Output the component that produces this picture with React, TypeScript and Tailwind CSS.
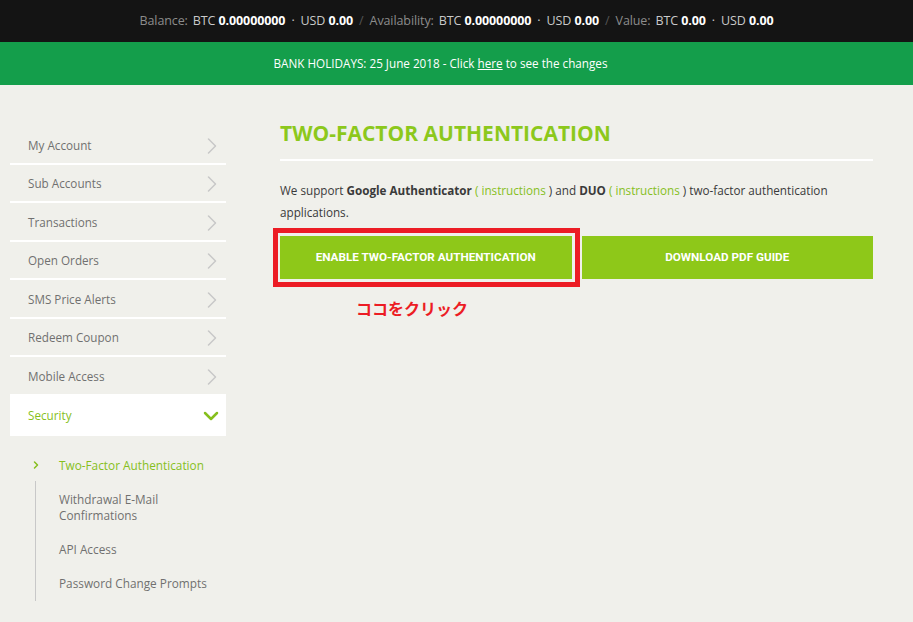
import { ChevronRight, ChevronDown } from "lucide-react";

const menu = [
  "My Account",
  "Sub Accounts",
  "Transactions",
  "Open Orders",
  "SMS Price Alerts",
  "Redeem Coupon",
  "Mobile Access",
];

const subItems = ["Withdrawal E-Mail Confirmations", "API Access", "Password Change Prompts"];

const Stat = ({ label, btc, usd }: { label: string; btc: string; usd: string }) => (
  <span>
    <span className="text-[#8c8c8c]">{label}:</span>
    <span className="ml-[5px] text-[#c9c9c9]">BTC</span>{" "}
    <span className="font-bold text-white">{btc}</span>
    <span className="mx-[6px] text-[#c9c9c9]">·</span>
    <span className="text-[#c9c9c9]">USD</span>{" "}
    <span className="font-bold text-white">{usd}</span>
  </span>
);

export default function App() {
  return (
    <div className="min-h-[622px] bg-[#f0f0eb] font-['Open_Sans',sans-serif]">
      {/* top balance bar */}
      <div className="flex h-[42px] items-center justify-center bg-[#141414] text-[12.5px] tracking-[-0.1px]">
        <Stat label="Balance" btc="0.00000000" usd="0.00" />
        <span className="mx-[6px] text-[#555]">/</span>
        <Stat label="Availability" btc="0.00000000" usd="0.00" />
        <span className="mx-[6px] text-[#555]">/</span>
        <Stat label="Value" btc="0.00" usd="0.00" />
      </div>

      {/* notice */}
      <div className="flex h-[43px] items-center justify-center bg-[#149e4b] pr-[32px] text-[11.7px] text-white">
        BANK HOLIDAYS: 25 June 2018 - Click&nbsp;<span className="underline">here</span>&nbsp;to see the changes
      </div>

      <div className="flex pl-[10px]">
        {/* sidebar */}
        <aside className="w-[216px] shrink-0 pt-[41px]">
          {menu.map((m) => (
            <div
              key={m}
              className="box-border flex h-[38.5px] items-center justify-between border-b-2 border-white pl-[18px] pt-[3px] text-[11.7px] text-[#707070]"
            >
              <span>{m}</span>
              <ChevronRight size={28} strokeWidth={1.3} className="text-[#c8c8c8]" />
            </div>
          ))}
          <div className="flex h-[40px] items-center justify-between bg-white pl-[18px] pr-[3px] text-[11.7px] text-[#86bf1d]">
            <span>Security</span>
            <ChevronDown size={24} strokeWidth={2.5} className="text-[#86bf1d]" />
          </div>

          <div className="pl-[20px] pt-[21px]">
            <div className="flex items-center text-[11.8px] text-[#86bf1d]">
              <ChevronRight size={12} strokeWidth={3} className="mr-[17px]" />
              <span>Two-Factor Authentication</span>
            </div>
            <div className="ml-[5px] mt-[7px] border-l border-[#c8c8c8] pb-[10px] pl-[23px] pt-[10px]">
              {subItems.map((s) => (
                <div key={s} className="mb-[18px] w-[160px] text-[11.8px] leading-[16px] text-[#707070] last:mb-0">
                  {s === subItems[0] ? (
                    <>
                      Withdrawal E-Mail
                      <br />
                      Confirmations
                    </>
                  ) : (
                    s
                  )}
                </div>
              ))}
            </div>
          </div>
        </aside>

        {/* main */}
        <main className="ml-[54px] w-[593px] pt-[34px]">
          <h1 className="text-[21px] font-bold leading-[28px] text-[#8cc81c]">TWO-FACTOR AUTHENTICATION</h1>
          <div className="mt-[12px] h-[2px] bg-white" />
          <p className="mt-[18px] text-[11.7px] leading-[22px] text-[#3a3a3a]">
            We support <b>Google Authenticator</b> <span className="text-[#86bf1d]">( instructions</span> ) and{" "}
            <b>DUO</b> <span className="text-[#86bf1d]">( instructions</span> ) two-factor authentication applications.
          </p>
          <div className="mt-[13px] flex gap-[10px] font-['Roboto',sans-serif]">
            <div className="relative flex-1">
              <div className="flex h-[43px] items-center justify-center bg-[#8ec819] text-[11.7px] font-bold text-white">
                ENABLE TWO-FACTOR AUTHENTICATION
              </div>
              <div className="absolute -bottom-[8px] -left-[7px] -right-[8px] -top-[8px] border-[5px] border-[#ec1c24]" />
              <div className="absolute left-[76px] top-[60px] whitespace-nowrap font-['Noto_Sans_CJK_JP',sans-serif] text-[16px] font-bold text-[#ec1c24]">
                ココをクリック
              </div>
            </div>
            <div className="flex h-[43px] flex-1 items-center justify-center bg-[#8ec819] text-[11.7px] font-bold text-white">
              DOWNLOAD PDF GUIDE
            </div>
          </div>
        </main>
      </div>
    </div>
  );
}
